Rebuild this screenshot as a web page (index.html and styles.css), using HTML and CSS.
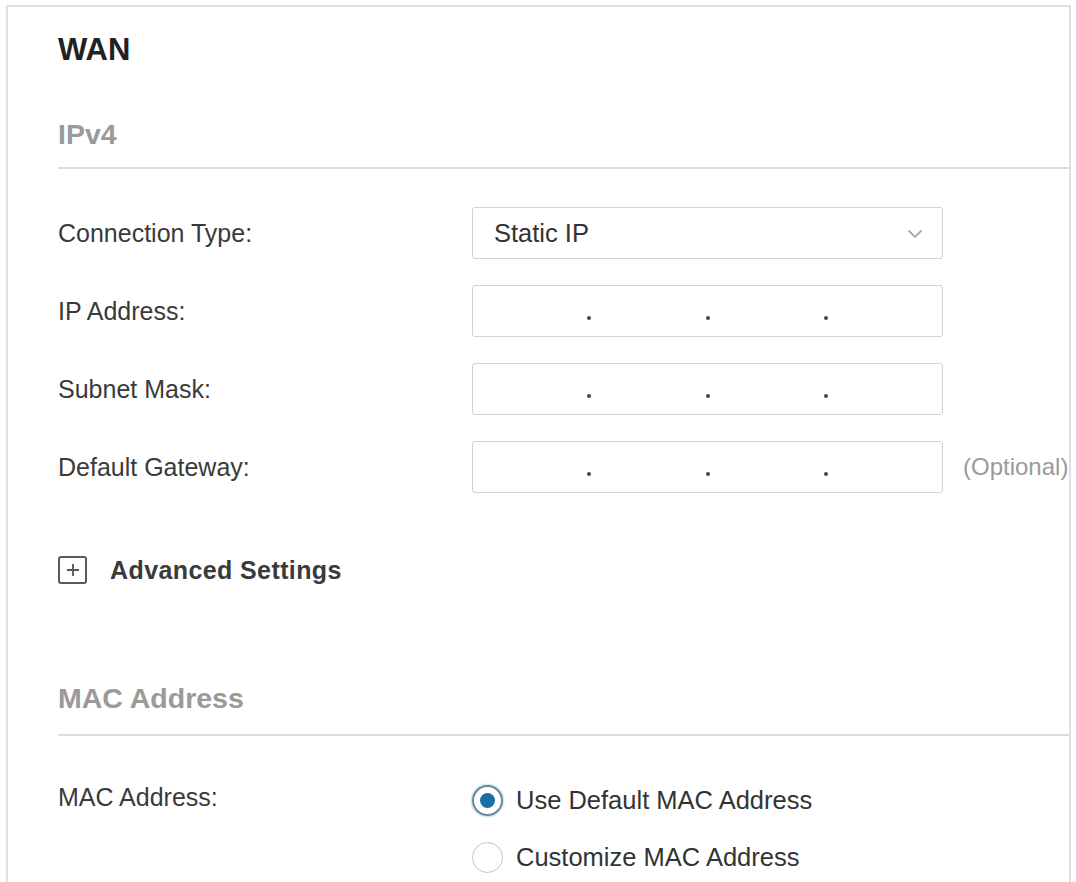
FILE: index.html
```html
<!DOCTYPE html>
<html lang="en">
<head>
<meta charset="utf-8">
<title>WAN</title>
<link rel="stylesheet" href="styles.css">
</head>
<body>
<div class="panel">
  <h1 class="title">WAN</h1>

  <div class="section-head">IPv4</div>

  <div class="rows">
    <div class="row">
      <div class="label">Connection Type:</div>
      <div class="select">
        <span class="select-value">Static IP</span>
        <svg class="chevron" width="16" height="10" viewBox="0 0 16 10"><path d="M1.5 1.5 L8 8 L14.5 1.5" fill="none" stroke="#aaa" stroke-width="1.8"/></svg>
      </div>
    </div>
    <div class="row">
      <div class="label">IP Address:</div>
      <div class="ip-box"><span class="seg"></span><span class="dot"></span><span class="seg"></span><span class="dot"></span><span class="seg"></span><span class="dot"></span><span class="seg"></span></div>
    </div>
    <div class="row">
      <div class="label">Subnet Mask:</div>
      <div class="ip-box"><span class="seg"></span><span class="dot"></span><span class="seg"></span><span class="dot"></span><span class="seg"></span><span class="dot"></span><span class="seg"></span></div>
    </div>
    <div class="row">
      <div class="label">Default Gateway:</div>
      <div class="ip-box"><span class="seg"></span><span class="dot"></span><span class="seg"></span><span class="dot"></span><span class="seg"></span><span class="dot"></span><span class="seg"></span></div>
      <div class="hint">(Optional)</div>
    </div>
  </div>

  <div class="advanced">
    <span class="plus-box">
      <svg width="14" height="14" viewBox="0 0 14 14"><path d="M7 1 V13 M1 7 H13" stroke="#555" stroke-width="1.8"/></svg>
    </span>
    <span class="advanced-text">Advanced Settings</span>
  </div>

  <div class="section-head mac-head">MAC Address</div>

  <div class="mac-row">
    <div class="label">MAC Address:</div>
    <div class="radios">
      <div class="radio-opt">
        <span class="radio checked"><span class="radio-dot"></span></span>
        <span class="radio-text">Use Default MAC Address</span>
      </div>
      <div class="radio-opt">
        <span class="radio"></span>
        <span class="radio-text">Customize MAC Address</span>
      </div>
    </div>
  </div>
</div>
</body>
</html>
```

FILE: styles.css
```css
html, body {
  margin: 0;
  padding: 0;
  background: #ffffff;
}

body {
  font-family: "Liberation Sans", Arial, sans-serif;
  color: #333333;
  height: 882px;
  overflow: hidden;
}

.panel {
  margin: 5px 0 0 6px;
  width: 1065px;
  height: 900px;
  border: 2px solid #e1e1e1;
  border-bottom: none;
  padding: 25px 0 0 50px;
  box-sizing: border-box;
  background: #fff;
}

.title {
  margin: 0;
  font-size: 31px;
  line-height: 36px;
  font-weight: bold;
  color: #222;
}

.section-head {
  margin-top: 50px;
  font-size: 28.5px;
  line-height: 32px;
  font-weight: bold;
  color: #9a9a9a;
  padding-bottom: 17px;
  border-bottom: 2px solid #dcdcdc;
}

.rows {
  margin-top: 38px;
  display: flex;
  flex-direction: column;
  gap: 26px;
}

.row {
  display: flex;
  align-items: center;
  height: 52px;
}

.label {
  width: 414px;
  flex: none;
  font-size: 25px;
  line-height: 30px;
  color: #3a3a3a;
}

.select,
.ip-box {
  width: 471px;
  height: 52px;
  box-sizing: border-box;
  border: 1.5px solid #d2d2d2;
  border-radius: 3px;
  background: #fff;
  flex: none;
}

.select {
  display: flex;
  align-items: center;
  justify-content: space-between;
  padding: 0 19px 0 21px;
}

.select-value {
  font-size: 25.5px;
  color: #333;
}

.chevron {
  margin-top: 2px;
}

.ip-box {
  display: flex;
  align-items: center;
}

.seg {
  flex: 1;
}

.dot {
  width: 4px;
  height: 4px;
  border-radius: 50%;
  background: #444;
  margin-top: 14px;
}

.hint {
  margin-left: 20px;
  font-size: 24px;
  color: #9a9a9a;
}

.advanced {
  margin-top: 62px;
  display: flex;
  align-items: center;
  height: 30px;
}

.plus-box {
  width: 29px;
  height: 28px;
  box-sizing: border-box;
  border: 2px solid #5a5a5a;
  border-radius: 3px;
  display: flex;
  align-items: center;
  justify-content: center;
}

.advanced-text {
  margin-left: 23px;
  font-size: 25px;
  font-weight: bold;
  color: #3a3a3a;
  letter-spacing: 0.4px;
}

.mac-head {
  margin-top: 97px;
  padding-bottom: 20px;
}

.mac-row {
  margin-top: 46px;
  display: flex;
  align-items: flex-start;
}

.radios {
  display: flex;
  flex-direction: column;
  gap: 21px;
}

.radio-opt {
  display: flex;
  align-items: center;
  height: 36px;
}

.radio {
  width: 31px;
  height: 31px;
  box-sizing: border-box;
  border: 1.5px solid #c4c4c4;
  border-radius: 50%;
  display: flex;
  align-items: center;
  justify-content: center;
  flex: none;
}

.radio.checked {
  border: 2.5px solid #6b8796;
  box-shadow: 0 0 0 1.5px #cfeaf2;
}

.radio-dot {
  width: 15px;
  height: 15px;
  border-radius: 50%;
  background: #1b6fa3;
}

.radio-text {
  margin-left: 13px;
  font-size: 25.5px;
  color: #333;
}
```
